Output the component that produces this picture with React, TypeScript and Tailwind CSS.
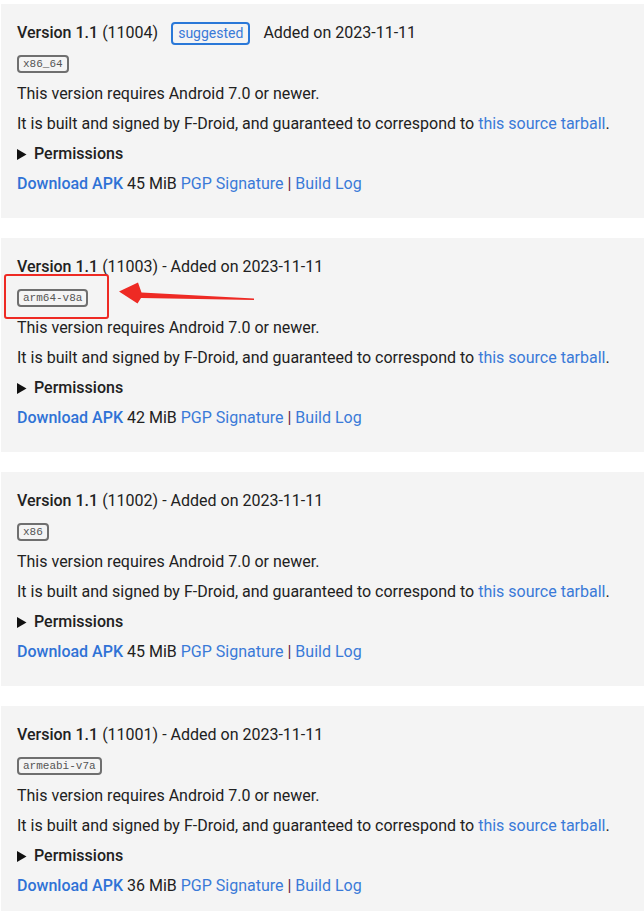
const versions = [
  { code: "11004", arch: "x86_64", size: "45 MiB", suggested: true },
  { code: "11003", arch: "arm64-v8a", size: "42 MiB", suggested: false },
  { code: "11002", arch: "x86", size: "45 MiB", suggested: false },
  { code: "11001", arch: "armeabi-v7a", size: "36 MiB", suggested: false },
];

function VersionCard({ v }: { v: (typeof versions)[number] }) {
  return (
    <div className="bg-[#f4f4f4] ml-[1px] pl-[16px] pt-[17px] pb-[19px]">
      <div className="flex items-center h-6 leading-6">
        <span className="font-medium">Version 1.1</span>
        <span className="ml-[4px]">({v.code})</span>
        {v.suggested ? (
          <>
            <span className="ml-[13px] border-2 border-[#2a78d8] rounded-[4px] px-[5px] h-[23px] leading-[19px] text-[14px] text-[#3a7ad8]">
              suggested
            </span>
            <span className="ml-[13px]">Added on 2023-11-11</span>
          </>
        ) : (
          <span className="ml-[4px]">- Added on 2023-11-11</span>
        )}
      </div>
      <div className="mt-[10px] flex">
        <span className="border-2 border-[#6f6f6f] rounded-[4px] px-[4px] h-[18px] leading-[14px] text-[11px] text-[#555] font-['Liberation_Mono',monospace]">
          {v.arch}
        </span>
      </div>
      <div className="mt-[6px] leading-[30px]">
        <p>This version requires Android 7.0 or newer.</p>
        <p>
          It is built and signed by F-Droid, and guaranteed to correspond to{" "}
          <a className="text-[#3a7ad8]">this source tarball</a>.
        </p>
        <div className="flex items-center">
          <svg width="10" height="11" viewBox="0 0 10 11" className="mr-[7px]">
            <path d="M0 0 L9.5 5.5 L0 11 Z" fill="#111" />
          </svg>
          <span className="font-medium">Permissions</span>
        </div>
        <p>
          <a className="font-medium text-[#2f72d6]">Download APK</a> {v.size}{" "}
          <a className="text-[#3a7ad8]">PGP Signature</a>{" "}
          <span className="text-[#6b2040]">|</span>{" "}
          <a className="text-[#3a7ad8]">Build Log</a>
        </p>
      </div>
    </div>
  );
}

export default function App() {
  return (
    <div className="relative w-[644px] h-[911px] overflow-hidden bg-white font-['Roboto',sans-serif] text-[16px] text-[#212121]">
      <div className="pt-[4px] flex flex-col gap-[20px]">
        {versions.map((v) => (
          <VersionCard key={v.code} v={v} />
        ))}
      </div>
      <div className="absolute left-[4px] top-[274px] w-[105px] h-[45px] border-[2.5px] border-[#ee2a24] rounded-[3px]" />
      <svg className="absolute left-0 top-0" width="644" height="911" viewBox="0 0 644 911">
        <path
          d="M119 291.5 L138 282.5 L141.5 292.5 L254 298.5 L254 300 L141 298 L137.5 303.5 Z"
          fill="#ee2a24"
        />
      </svg>
    </div>
  );
}
